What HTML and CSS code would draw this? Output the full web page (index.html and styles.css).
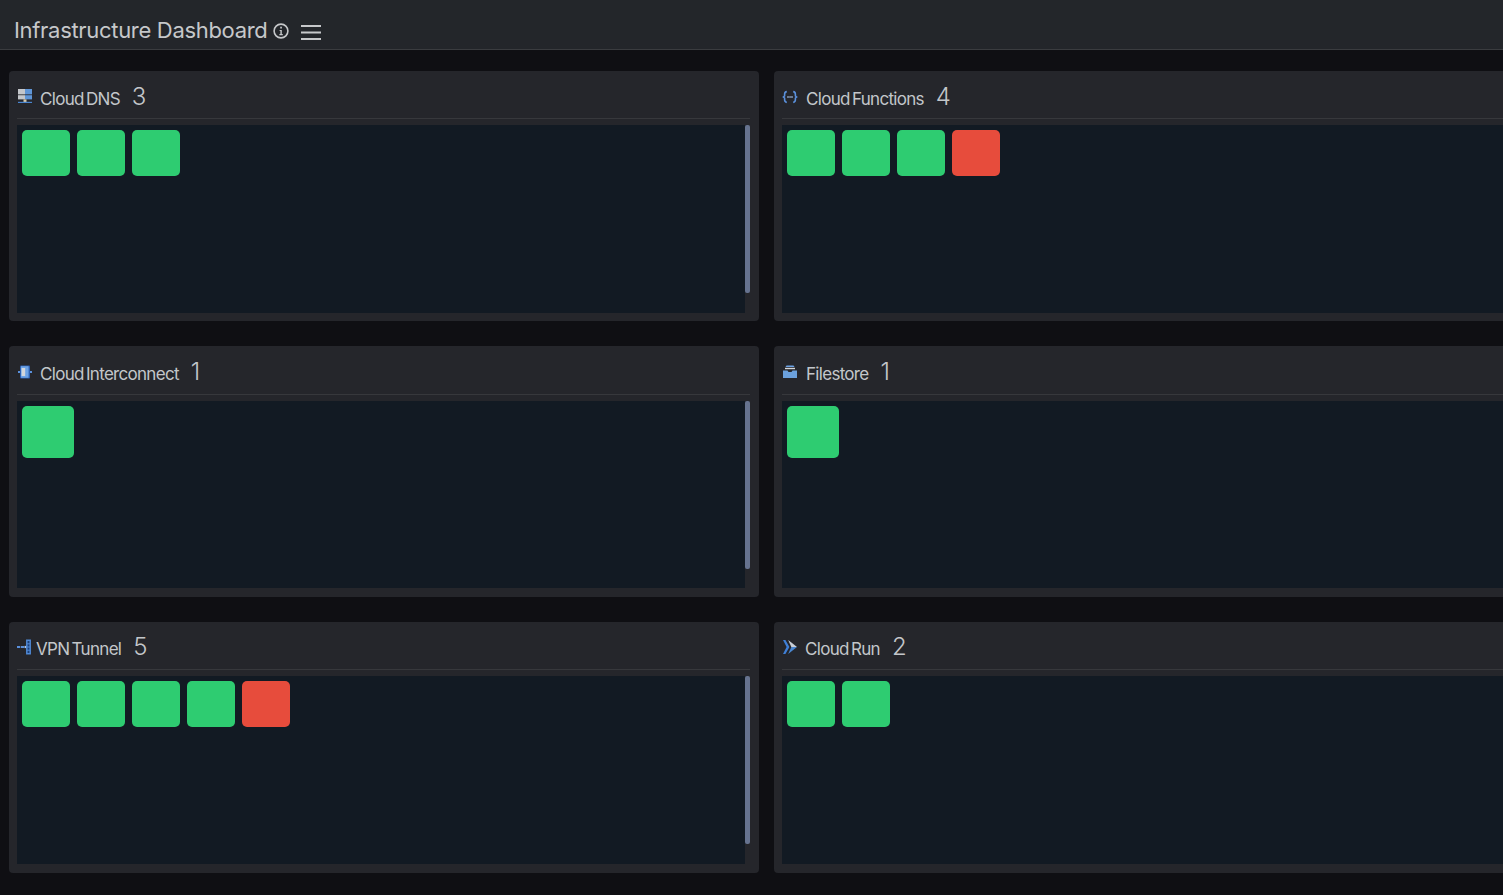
FILE: index.html
```html
<!DOCTYPE html>
<html lang="en">
<head>
<meta charset="utf-8">
<title>Infrastructure Dashboard</title>
<link rel="stylesheet" href="styles.css">
</head>
<body>
<header class="topbar">
  <h1 class="page-title">Infrastructure Dashboard</h1>
  <svg class="info-icon" viewBox="0 0 16 16" width="16" height="16" aria-hidden="true"><circle cx="8" cy="8" r="6.9" fill="none" stroke="#c6c8ca" stroke-width="1.6"/><path d="M6.6 6.9h2.2v4.2h1v1.2H6.4v-1.2h1v-3H6.6z" fill="#c6c8ca"/><rect x="7.2" y="3.7" width="1.7" height="1.8" fill="#c6c8ca"/></svg>
  <svg class="menu-icon" viewBox="0 0 20 15" width="20" height="15" aria-hidden="true"><path d="M0 1h20M0 7.5h20M0 14h20" stroke="#c6c8ca" stroke-width="1.9" fill="none"/></svg>
</header>
<main class="grid">
  <section class="panel">
    <div class="panel-head">
      <svg class="icon" viewBox="0 0 16 16" width="16" height="16" aria-hidden="true"><rect x="1" y="0" width="7" height="5.4" fill="#c4c7cb"/><rect x="8" y="0" width="7" height="5.4" fill="#5f96d8"/><rect x="1" y="6.2" width="7" height="4.2" fill="#c4c7cb"/><rect x="8" y="6.2" width="7" height="4.2" fill="#5f96d8"/><rect x="6.5" y="10.4" width="3" height="3.2" fill="#d8c9a8"/><path d="M1 13.4h14" stroke="#4a86d0" stroke-width="1.2"/></svg>
      <div class="panel-title"><span class="panel-name">Cloud DNS</span><span class="panel-count">3</span></div>
    </div>
    <div class="panel-main">
      <div class="panel-body"><div class="tiles"><i class="tile ok"></i><i class="tile ok"></i><i class="tile ok"></i></div></div>
      <div class="track"><span class="thumb"></span></div>
    </div>
  </section>
  <section class="panel">
    <div class="panel-head">
      <svg class="icon" viewBox="0 0 16 16" width="16" height="16" aria-hidden="true"><path d="M4.8 2.6Q2.6 2.8 2.6 5.4V7L1.4 8l1.2 1v1.6q0 2.6 2.2 2.8M11.2 2.6q2.2.2 2.2 2.8V7l1.2 1-1.2 1v1.6q0 2.6-2.2 2.8" fill="none" stroke="#5a90dc" stroke-width="1.6"/><path d="M5.3 8h1.4M7.4 8h1.3M9.3 8h1.4" stroke="#a9c4ea" stroke-width="1.5"/></svg>
      <div class="panel-title title-wide"><span class="panel-name">Cloud Functions</span><span class="panel-count">4</span></div>
    </div>
    <div class="panel-main">
      <div class="panel-body"><div class="tiles"><i class="tile ok"></i><i class="tile ok"></i><i class="tile ok"></i><i class="tile bad"></i></div></div>
    </div>
  </section>
  <section class="panel">
    <div class="panel-head">
      <svg class="icon" viewBox="0 0 16 16" width="16" height="16" aria-hidden="true"><path d="M1 8h3M12 8h3" stroke="#5a90dc" stroke-width="2.2"/><rect x="3" y="1.5" width="10" height="13" rx="1" fill="#2c5fb0"/><rect x="4" y="2.2" width="7.6" height="11.6" fill="#6da3e6"/><rect x="4.6" y="4" width="3.6" height="8" fill="#d3d6da"/></svg>
      <div class="panel-title"><span class="panel-name">Cloud Interconnect</span><span class="panel-count">1</span></div>
    </div>
    <div class="panel-main">
      <div class="panel-body"><div class="tiles"><i class="tile tile-lg ok"></i></div></div>
      <div class="track"><span class="thumb"></span></div>
    </div>
  </section>
  <section class="panel">
    <div class="panel-head">
      <svg class="icon" viewBox="0 0 16 16" width="16" height="16" aria-hidden="true"><path d="M4.5 1.5h7l1 1.5h-9z" fill="#6da3e6"/><path d="M3 4.5h10" stroke="#d3d6da" stroke-width="1.4"/><path d="M1 6.5h4.5l1 1.5h3l1-1.5H15V14H1z" fill="#6ba1de"/></svg>
      <div class="panel-title title-wide"><span class="panel-name">Filestore</span><span class="panel-count">1</span></div>
    </div>
    <div class="panel-main">
      <div class="panel-body"><div class="tiles"><i class="tile tile-lg ok"></i></div></div>
    </div>
  </section>
  <section class="panel">
    <div class="panel-head">
      <svg class="icon" viewBox="0 0 16 16" width="16" height="16" aria-hidden="true"><path d="M0 8h7.5" stroke="#5a90dc" stroke-width="2.2" stroke-dasharray="3.2 .7"/><path d="M7.5 8h2.5" stroke="#a9c4ea" stroke-width="2.2"/><path d="M9.8 1.2h3.4v13.6H9.8z" fill="#1d3f75" stroke="#4f88d4" stroke-width="1.5"/><path d="M10 4.8h3M10 8h3M10 11.2h3" stroke="#4f88d4"/></svg>
      <div class="panel-title title-tight"><span class="panel-name">VPN Tunnel</span><span class="panel-count">5</span></div>
    </div>
    <div class="panel-main">
      <div class="panel-body"><div class="tiles"><i class="tile ok"></i><i class="tile ok"></i><i class="tile ok"></i><i class="tile ok"></i><i class="tile bad"></i></div></div>
      <div class="track"><span class="thumb"></span></div>
    </div>
  </section>
  <section class="panel">
    <div class="panel-head">
      <svg class="icon" viewBox="0 0 16 16" width="16" height="16" aria-hidden="true"><path d="M1 1h2.4l4 7-4 7H1l3.6-7z" fill="#3f7fd6"/><path d="M6.2 1 15 8H9.3z" fill="#c9ced6"/><path d="M6.2 15 15 8H9.3z" fill="#4a86d0"/></svg>
      <div class="panel-title"><span class="panel-name">Cloud Run</span><span class="panel-count">2</span></div>
    </div>
    <div class="panel-main">
      <div class="panel-body"><div class="tiles"><i class="tile ok"></i><i class="tile ok"></i></div></div>
    </div>
  </section>
</main>
</body>
</html>
```
FILE: styles.css
```css
* { box-sizing: border-box; }
html, body { margin: 0; height: 100%; overflow: hidden; }
body {
  background: #0f0f13;
  color: #c6c8ca;
  font-family: Inter, "Liberation Sans", sans-serif;
}
.topbar {
  height: 50px;
  background: #23262a;
  border-bottom: 1px solid #3a3c3f;
  display: flex;
  align-items: center;
  padding: 10px 0 0 14px;
}
.page-title {
  margin: 0;
  font-size: 22px;
  font-weight: 400;
  letter-spacing: -0.31px;
  color: #c6c8ca;
  white-space: nowrap;
}
.info-icon { margin-left: 5px; margin-top: 3px; }
.menu-icon { margin-left: 12px; margin-top: 5px; }
.grid {
  display: grid;
  grid-template-columns: 750px 750px;
  grid-template-rows: 250.4px 250.4px 251px;
  column-gap: 15px;
  row-gap: 25.05px;
  padding: 21px 0 0 9px;
  width: 1600px;
}
.panel {
  background: #25262b;
  border-radius: 4px;
  padding: 0 9px 8.5px 8px;
  display: flex;
  flex-direction: column;
}
.panel-head {
  height: 48.2px;
  border-bottom: 1px solid #37383c;
  display: flex;
  align-items: center;
  flex: none;
  margin-bottom: 6px;
}
.icon { flex: none; margin-top: 4px; }
.panel-title {
  display: flex;
  align-items: baseline;
  margin-left: 7px;
  padding-top: 3px;
}
.title-wide { margin-left: 8px; }
.title-tight { margin-left: 3px; }
.panel-name {
  font-size: 17px;
  letter-spacing: -0.7px;
  word-spacing: -1.8px;
  color: #c3c6ca;
  white-space: nowrap;
}
.panel-count {
  margin-left: 12px;
  font-size: 24px;
  font-weight: 300;
  color: #c3c6ca;
}
.panel-main {
  flex: 1;
  min-height: 0;
  display: flex;
}
.panel-body {
  flex: 1;
  background: #121a23;
  padding: 5px;
}
.tiles { display: flex; gap: 7px; }
.tile { width: 48px; height: 46px; border-radius: 5px; display: block; }
.tile-lg { width: 52px; height: 52px; }
.ok { background: #2ecc71; }
.bad { background: #e74c3c; }
.track { flex: none; width: 5px; }
.thumb {
  display: block;
  height: 168px;
  border-radius: 2px;
  background: #66738f;
}
```
